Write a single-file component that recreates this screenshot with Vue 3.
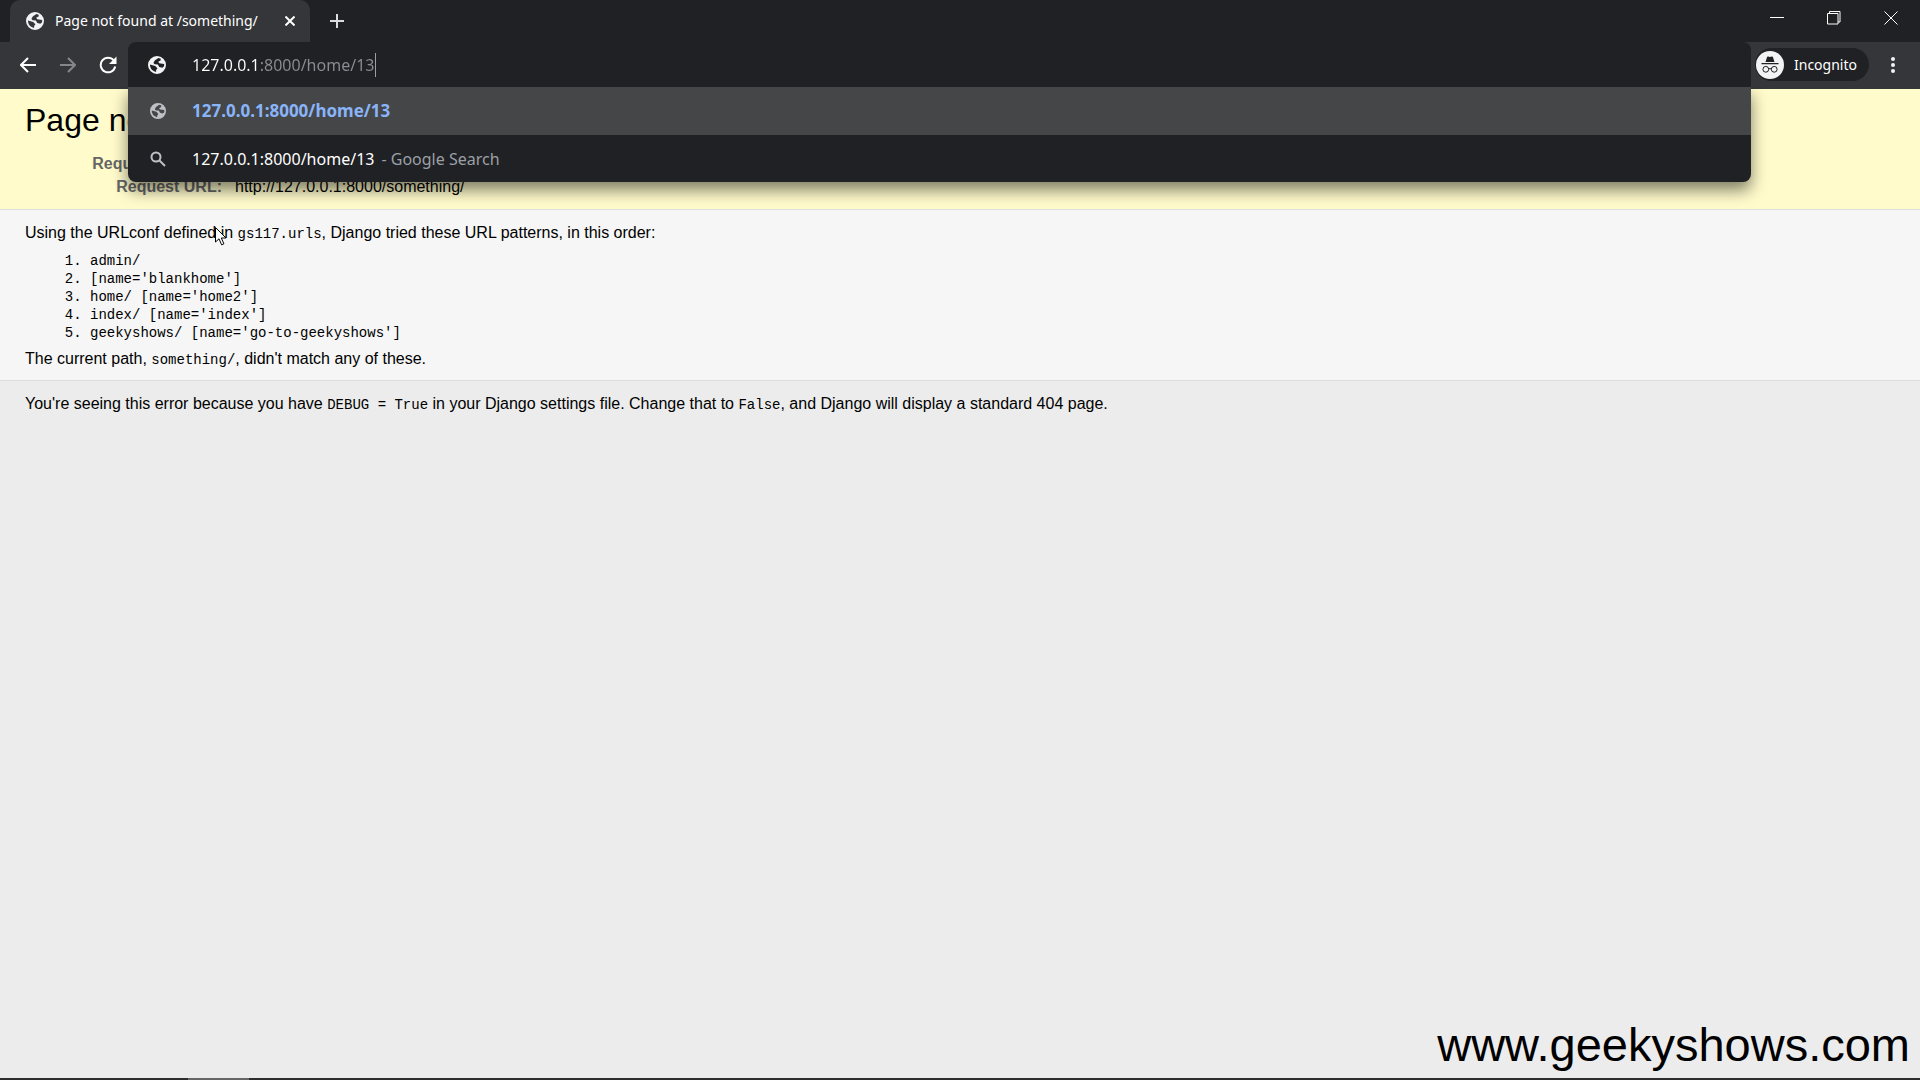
<script setup>
import { ref } from 'vue'

const address = ref('127.0.0.1:8000/home/13')
const globe =
  'M12 2a10 10 0 1 0 0 20 10 10 0 1 0 0-20zM13.5 4.200L9.500 7 8 9.800l1.500 1.500 3.500.2 1.500 2.700 3.500.8 1.800-1.500.2-2.500-2-.5-3.500-.5-1.200-1.500 2.700-1.500.2-2zM4.200 11.500c0 4.500 2.800 7.500 6.800 8.300v-2.300l1.500-1.800-2.500-2.700z'
const patterns = [
  'admin/',
  "[name='blankhome']",
  "home/ [name='home2']",
  "index/ [name='index']",
  "geekyshows/ [name='go-to-geekyshows']",
]
</script>

<template>
  <div class="window">
    <header class="tabstrip">
      <div class="tab">
        <svg class="globe" viewBox="2 2 20 20"><path :d="globe" /></svg>
        <span class="tab-title">Page not found at /something/</span>
        <button class="tab-close" aria-label="Close tab">
          <svg viewBox="0 0 10 10"><path d="M.5 .5l9 9M9.500 .5l-9 9" /></svg>
        </button>
      </div>
      <button class="new-tab" aria-label="New tab">
        <svg viewBox="0 0 14 14"><path d="M7 0v14M0 7h14" /></svg>
      </button>
      <div class="controls">
        <button aria-label="Minimize"><svg viewBox="0 0 14 14"><path d="M0 6.500h14" /></svg></button>
        <button aria-label="Restore">
          <svg viewBox="0 0 14 14"><path d="M.5 2.500h10.500v10.500H.5zM2.500 2.500V.5h10.500v10.500h-2" /></svg>
        </button>
        <button aria-label="Close"><svg viewBox="0 0 14 14"><path d="M.5 .5l13 13M13.500 .5l-13 13" /></svg></button>
      </div>
    </header>

    <nav class="toolbar">
      <div class="nav">
        <button aria-label="Back"><svg viewBox="0 0 16 16"><path d="M16 8H1.500M8 1L1 8l7 7" /></svg></button>
        <button aria-label="Forward" disabled><svg viewBox="0 0 16 16"><path d="M0 8h14.500M8 1l7 7-7 7" /></svg></button>
        <button aria-label="Reload">
          <svg viewBox="0 0 18 18">
            <path d="M14.800 4.500A7.300 7.300 0 1 0 16.200 10.500" />
            <path class="solid" d="M17.500 .5v7.500H10z" />
          </svg>
        </button>
      </div>
      <div class="omnibox">
        <svg class="globe" viewBox="2 2 20 20"><path :d="globe" /></svg>
        <input v-model="address" class="address" aria-label="Address and search bar" spellcheck="false" />
        <span class="caret"></span>
        <ul class="suggestions">
          <li class="active">
            <svg class="globe" viewBox="2 2 20 20"><path :d="globe" /></svg>
            <b>127.0.0.1:8000/home/13</b>
          </li>
          <li>
            <svg class="search" viewBox="0 0 16 16"><circle cx="6" cy="6" r="4.500" /><path d="M9.500 9.500l5.500 5.500" /></svg>
            <span>127.0.0.1:8000/home/13</span><span class="hint">- Google Search</span>
          </li>
        </ul>
      </div>
      <div class="profile">
        <svg viewBox="0 0 28 28">
          <circle class="disc" cx="14" cy="14" r="14" />
          <path class="hat" d="M9.500 11l1.500-4.800q.3-.9 1.200-.6l1.800.5 1.800-.5q.9-.3 1.200.6l1.500 4.800zM5.500 12h17v1.200h-17z" />
          <g class="glasses"><circle cx="9.800" cy="18.300" r="2.900" /><circle cx="18.200" cy="18.300" r="2.900" /><path d="M12.700 18q1.300-1 2.600 0" /></g>
        </svg>
        <span>Incognito</span>
      </div>
      <button class="menu" aria-label="Menu">
        <svg viewBox="0 0 4 18"><circle cx="2" cy="3" r="2" /><circle cx="2" cy="9" r="2" /><circle cx="2" cy="15" r="2" /></svg>
      </button>
    </nav>

    <main class="page">
      <section class="summary">
        <h1>Page not found <span>(404)</span></h1>
        <table>
          <tbody>
            <tr><th scope="row">Request Method:</th><td>GET</td></tr>
            <tr><th scope="row">Request URL:</th><td>http://127.0.0.1:8000/something/</td></tr>
          </tbody>
        </table>
      </section>
      <section class="info">
        <p>Using the URLconf defined in <code>gs117.urls</code>, Django tried these URL patterns, in this order:</p>
        <ol>
          <li v-for="p in patterns" :key="p">{{ p }}</li>
        </ol>
        <p>The current path, <code>something/</code>, didn't match any of these.</p>
      </section>
      <section class="explanation">
        <p>
          You're seeing this error because you have <code>DEBUG = True</code> in your Django settings file. Change that
          to <code>False</code>, and Django will display a standard 404 page.
        </p>
      </section>
    </main>

    <div class="watermark">www.geekyshows.com</div>
    <footer class="taskbar"><span></span></footer>
    <svg class="pointer" viewBox="0 0 12 19"><path d="M.5 .5v14.500l3.500-3.200 2.600 6 2.300-1-2.600-5.800h4.700z" /></svg>
  </div>
</template>

<style>
body {
  margin: 0;
  background: #ececec;
}
</style>

<style scoped>
* {
  box-sizing: border-box;
}
.window {
  position: relative;
  display: flex;
  flex-direction: column;
  min-height: 100vh;
  font-family: 'Liberation Sans', Arial, sans-serif;
  font-size: 16px;
  color: #000;
}
button {
  display: flex;
  align-items: center;
  justify-content: center;
  padding: 0;
  border: 0;
  background: none;
}
svg {
  display: block;
  flex: none;
  fill: none;
  stroke: #fff;
}
.globe {
  width: 18px;
  height: 18px;
  fill: #f1f3f4;
  fill-rule: evenodd;
  stroke: none;
}
.tabstrip,
.toolbar {
  display: flex;
  font-family: 'Noto Sans', 'Open Sans', sans-serif;
  color: #fff;
}
.tabstrip {
  height: 42px;
  padding: 0 1px 0 10px;
  background: #202124;
}
.tab {
  display: flex;
  align-items: center;
  width: 300px;
  padding: 0 14px 0 16px;
  border-radius: 10px 10px 0 0;
  background: #35363a;
}
.tab-title {
  flex: 1;
  margin-left: 11px;
  font-size: 14px;
  line-height: 20px;
  white-space: nowrap;
}
.tab-close {
  width: 12px;
  height: 24px;
}
.tab-close svg {
  width: 10px;
  height: 10px;
  stroke-width: 2;
}
.new-tab {
  width: 54px;
}
.new-tab svg {
  width: 14px;
  height: 14px;
  stroke: #dadce0;
  stroke-width: 2;
}
.controls {
  display: flex;
  height: 36px;
  margin-left: auto;
}
.controls button {
  width: 57px;
}
.controls svg {
  width: 14px;
  height: 14px;
}
.toolbar {
  height: 47px;
  padding-bottom: 2px;
  background: #35363a;
}
.nav {
  display: flex;
  align-items: center;
  width: 128px;
  padding-left: 8px;
}
.nav button {
  width: 40px;
  height: 40px;
}
.nav svg {
  width: 16px;
  height: 16px;
  stroke-width: 2;
}
.nav button:last-child svg {
  width: 18px;
  height: 18px;
}
.nav button:disabled {
  opacity: 0.4;
}
.solid {
  fill: #fff;
  stroke: none;
}
.omnibox {
  position: relative;
  z-index: 2;
  display: flex;
  flex: 1;
  align-items: center;
  height: 45px;
  padding-left: 20px;
  border-radius: 8px 8px 0 0;
  background: #202124;
}
.address {
  margin-left: 26px;
  padding: 0;
  border: 0;
  outline: 0;
  field-sizing: content;
  font: 16px/24px 'Noto Sans', 'Open Sans', sans-serif;
  color: transparent;
  background: linear-gradient(90deg, #fff 68px, #8a8d91 68px);
  background-clip: text;
}
.caret {
  width: 1px;
  height: 24px;
  margin-left: 1px;
  background: #9aa0a6;
}
.suggestions {
  position: absolute;
  top: 100%;
  left: 0;
  right: 0;
  margin: 0;
  padding: 0;
  list-style: none;
  line-height: 22px;
  border-radius: 0 0 8px 8px;
  background: #202124;
  box-shadow: 0 8px 16px rgba(0, 0, 0, 0.5);
  clip-path: inset(0 -30px -40px -30px);
}
.suggestions li {
  display: flex;
  align-items: center;
  height: 47px;
  padding-left: 22px;
}
.suggestions .active {
  height: 48px;
  background: #444648;
}
.suggestions svg {
  width: 16px;
  height: 16px;
  margin-right: 26px;
}
.suggestions .globe {
  fill: #bdc1c6;
}
.suggestions .search {
  stroke: #bdc1c6;
  stroke-width: 2;
}
.suggestions b {
  font-weight: 700;
  font-size: 17px;
  color: #8ab4f8;
}
.hint {
  margin-left: 7px;
  font-size: 16px;
  color: #9aa0a6;
}
.profile {
  display: flex;
  align-items: center;
  align-self: center;
  width: 114px;
  height: 33px;
  margin-left: 4px;
  border-radius: 17px;
  font-size: 14px;
  line-height: 20px;
  background: #202124;
}
.profile svg {
  width: 28px;
  height: 28px;
  margin: 0 10px 0 1px;
}
.disc {
  fill: #f1f3f4;
  stroke: none;
}
.hat {
  fill: #202124;
  stroke: none;
}
.glasses {
  stroke: #202124;
}
.menu {
  width: 51px;
  height: 45px;
  padding-right: 4px;
}
.menu svg {
  width: 4px;
  height: 18px;
  fill: #f1f3f4;
  stroke: none;
}
.summary {
  padding: 11px 25px;
  border-bottom: 1px solid #ddd;
  background: #fffbcb;
}
h1 {
  margin: 0 0 8px;
  font-weight: 400;
  font-size: 32px;
  line-height: 40px;
}
h1 span {
  font-size: 20px;
  color: #666;
}
table {
  border-collapse: collapse;
}
th,
td {
  padding: 0;
  line-height: 23px;
  text-align: left;
}
th {
  width: 197px;
  text-align: right;
  color: #666;
}
td {
  padding-left: 13px;
}
.info {
  padding: 12px 25px 10px;
  border-bottom: 1px solid #ddd;
  background: #f6f6f6;
}
.explanation {
  padding: 12px 25px;
}
p {
  margin: 0;
  line-height: 22px;
}
code,
ol {
  font-family: 'Liberation Mono', monospace;
  font-size: 14px;
}
code {
  line-height: 18px;
}
ol {
  margin: 8px 0 6px;
  padding-left: 65px;
  line-height: 18px;
}
.watermark {
  margin-top: auto;
  padding-right: 10px;
  font-size: 47px;
  line-height: 66px;
  text-align: right;
}
.taskbar {
  height: 2px;
  padding-left: 188px;
  background: #2e2e2e;
}
.taskbar span {
  display: block;
  width: 61px;
  height: 2px;
  background: #666;
}
.pointer {
  position: absolute;
  top: 227px;
  left: 215px;
  width: 12px;
  height: 19px;
  fill: #fff;
  stroke: #000;
}
</style>
